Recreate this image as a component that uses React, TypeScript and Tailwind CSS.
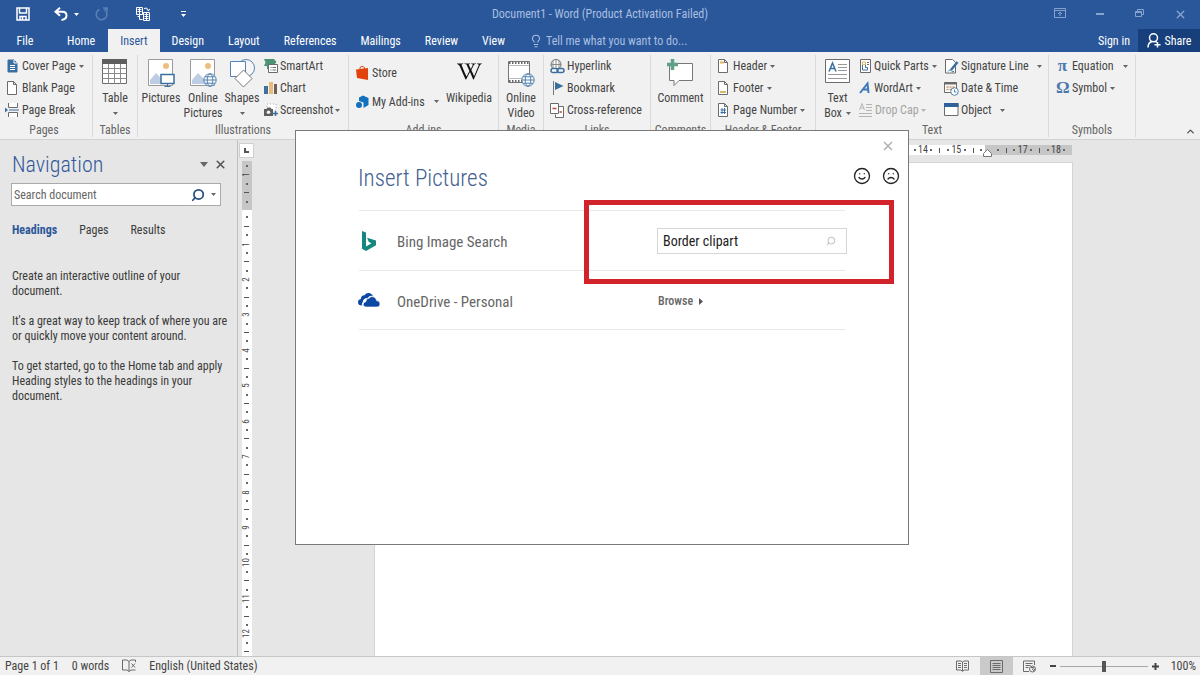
import React from 'react';
import { ChevronUp, Frown, Lightbulb, Search, Smile, X } from 'lucide-react';
import { FaWikipediaW } from 'react-icons/fa';

const Caret: React.FC<{ className?: string }> = ({ className = 'text-[#666]' }) => (
  <svg viewBox="0 0 5 3" className={`w-[5px] h-[3px] shrink-0 ${className}`} fill="currentColor">
    <path d="M0 0h5L2.5 3z" />
  </svg>
);

interface IconProps {
  w?: number;
  h?: number;
  children: React.ReactNode;
}

const Icon: React.FC<IconProps> = ({ w = 14, h = 14, children }) => (
  <svg width={w} height={h} viewBox={`0 0 ${w} ${h}`} fill="none" stroke="#6b6b6b" className="shrink-0">
    {children}
  </svg>
);

const Sheet = () => <path d="M2.5.5h6l3 3v10h-9zM8.5.5v3h3" fill="#fff" />;

const CoverPageIcon = () => (
  <Icon>
    <path d="M3 1h6l3 3v9H3z" fill="#3b6f9f" stroke="#3b6f9f" />
    <path d="M9 1v3h3M5 6.5h5M5 8.5h5M5 10.5h5" stroke="#fff" />
  </Icon>
);

const PageBreakIcon = () => (
  <Icon>
    <path d="M3.5 0v4.500h9V0M3.500 14V9.500h9V14" fill="#fff" />
    <path d="M4 7h10" stroke="#3b6f9f" />
    <path d="M0 4.500v5L3 7z" fill="#3b6f9f" stroke="none" />
  </Icon>
);

const TableIcon = () => (
  <Icon w={26} h={26}>
    <path d="M.5.5h24v24H.5z" fill="#fff" />
    <path d="M0 0h25v5H0z" fill="#5e5e5e" stroke="none" />
    <path d="M.5 9.500h24M.5 14.500h24M.5 19.500h24M6.500 5v20M12.500 5v20M18.500 5v20" stroke="#8a8a8a" />
  </Icon>
);

const Photo = () => (
  <>
    <path d="M.5.5h24v26H.5z" fill="#fff" stroke="#9a9a9a" />
    <circle cx="18" cy="7" r="3" fill="#ecc07c" stroke="none" />
    <path d="M2 25V21l6-7 6 6 3-3 7 7v1z" fill="#bdcde4" stroke="none" />
  </>
);

const PicturesIcon = () => (
  <Icon w={27} h={29}>
    <Photo />
    <path d="M13 15.500h13v9H13z" fill="#fff" stroke="#3b6f9f" strokeWidth="1.5" />
    <path d="M19.500 25v2.500M16.500 27.500h6" stroke="#3b6f9f" />
  </Icon>
);

const Globe = () => (
  <g stroke="#4f7fae">
    <circle cx="20" cy="21" r="6.200" fill="#fff" />
    <ellipse cx="20" cy="21" rx="2.800" ry="6.200" />
    <path d="M14 21h12M15 17.800h10M15 24.200h10" />
  </g>
);

const OnlinePicturesIcon = () => (
  <Icon w={27} h={29}>
    <Photo />
    <Globe />
  </Icon>
);

const ShapesIcon = () => (
  <Icon w={27} h={29}>
    <circle cx="17" cy="9" r="8.500" fill="#f7f7f7" stroke="#5484b2" />
    <path d="M1.500 2.500h15v15h-15z" fill="#fff" stroke="#5484b2" />
    <path d="M14.500 11l8.500 8.500-8.500 8.500L6 19.500z" fill="#fff" stroke="#777" />
  </Icon>
);

const SmartArtIcon = () => (
  <Icon>
    <path d="M0 0h10l2.500 3L10 6H5v4H3V7H0l1.500-3.500z" fill="#4f9377" stroke="none" />
    <path d="M4.500 5.500h9v8h-9z" fill="#fff" />
    <path d="M6.500 8.500h1M8.500 8.500h3.500M6.500 11h1M8.500 11h3.500" />
  </Icon>
);

const ChartIcon = () => (
  <Icon>
    <path d="M0 5h4v8H0z" fill="#3f6f9f" stroke="none" />
    <path d="M5 1h4v12H5z" fill="#e8bb7b" stroke="none" />
    <path d="M10 3h3v10h-3z" fill="#6e6058" stroke="none" />
  </Icon>
);

const ScreenshotIcon = () => (
  <Icon>
    <path d="M3 1h9v6H3z" fill="#fff" stroke="#aaa" strokeDasharray="1 2" />
    <path d="M0 6h2.500L3.500 4.500h3L7.500 6H9v7H0z" fill="#5e5e5e" stroke="none" />
    <circle cx="4.500" cy="9.200" r="1.800" fill="#f1f1f1" stroke="none" />
    <path d="M11.500 8v5M9 10.500h5" stroke="#3b6f9f" strokeWidth="1.500" />
  </Icon>
);

const StoreIcon = () => (
  <Icon w={13} h={15}>
    <path d="M4 4V2.500Q6 0 8.500 2.500V4" stroke="#d8430f" />
    <path d="M0 4.500L12 3v12L1 13z" fill="#e2430c" stroke="none" />
  </Icon>
);

const AddinsIcon = () => (
  <Icon w={13} h={14}>
    <path d="M7 .5l5.500 2.500v7L7.500 13V7.500L3 6V2.500z" fill="#1370bd" stroke="none" />
    <circle cx="3" cy="10" r="3" fill="#1370bd" stroke="none" />
  </Icon>
);

const VideoIcon = () => (
  <Icon w={27} h={29}>
    <path d="M.5 2.500h21v21H.5z" fill="#fff" stroke="#777" />
    <path d="M1 4h20M1 22h14" stroke="#666" strokeWidth="2" strokeDasharray="1.500 1.500" />
    <path d="M1 6.500h20M1 19.500h14" stroke="#bbb" />
    <Globe />
  </Icon>
);

const LinkIcon = () => (
  <Icon w={15} h={15}>
    <circle cx="6" cy="5.500" r="5" fill="#fff" />
    <path d="M1 5.500h10M6 .5v10M3 1.500v8M9 1.500v8" stroke="#8a8a8a" />
    <rect x="1" y="9.500" width="7" height="4" rx="2" fill="#fff" stroke="#3b6f9f" strokeWidth="1.500" />
    <rect x="7" y="9.500" width="7" height="4" rx="2" stroke="#3b6f9f" strokeWidth="1.500" />
  </Icon>
);

const BookmarkIcon = () => (
  <Icon w={15}>
    <path d="M3.500 0v14" stroke="#777" />
    <path d="M5 1l8.500 4L5 9z" fill="#3b6f9f" stroke="none" />
  </Icon>
);

const CrossRefIcon = () => (
  <Icon w={15} h={15}>
    <path d="M8.500 3.500h5v11h-8v-3" fill="#fff" />
    <path d="M.5.500h8v10h-8z" fill="#fff" />
    <path d="M2.500 5.500h4M9.500 9h2.500" stroke="#b5523b" strokeWidth="1.500" />
  </Icon>
);

const CommentIcon = () => (
  <Icon w={27} h={29}>
    <path d="M2.500 4.500h23v17H12l-5 5v-5H2.500z" fill="#fff" stroke="#777" />
    <path d="M5.500 0v11M0 5.500h11" stroke="#5fa184" strokeWidth="3.500" />
  </Icon>
);

const HeaderIcon = () => (
  <Icon>
    <Sheet />
    <path d="M4 3.500h4" stroke="#d8b765" strokeWidth="2" />
  </Icon>
);

const FooterIcon = () => (
  <Icon>
    <Sheet />
    <path d="M4 11h6" stroke="#d8b765" strokeWidth="2" />
  </Icon>
);

const PageNumberIcon = () => (
  <Icon>
    <Sheet />
    <path d="M6 5v6M8.500 5v6M4.500 7h5.500M4.500 9.500h5.500" stroke="#3b6f9f" />
  </Icon>
);

const TextBoxIcon = () => (
  <Icon w={26} h={25}>
    <path d="M.5.500h24v23H.5z" fill="#fff" />
    <path d="M4 12.500L7.500 4L11 12.500M5.500 9.500h4" stroke="#3b6f9f" strokeWidth="1.500" />
    <path d="M13 5.500h9M13 8.500h9M13 11.500h9M3 15.500h19M3 19.500h19" stroke="#999" />
  </Icon>
);

const QuickPartsIcon = () => (
  <Icon w={12} h={14}>
    <path d="M1.500.500h10v13H1.500z" fill="#fff" />
    <path d="M3.500 3h3v2.500h-3z" stroke="#d8b765" />
    <path d="M3.500 6v5h5V8.500h-2V6" stroke="#3b6f9f" />
    <path d="M8 3.500h2M8 5.500h2" />
  </Icon>
);

const WordArtIcon = () => (
  <Icon w={12} h={14}>
    <path d="M1 12L8.500 2.500L9.500 12M4.500 8.500h5" stroke="#3f7ab8" strokeWidth="2" />
  </Icon>
);

const DropCapIcon = () => (
  <Icon w={14} h={16}>
    <path d="M.5 8L3 1.500L5.500 8M1.500 6h3M7 2.500h6M7 5.500h6M7 8.500h6M0 11.500h13M0 14.500h13" stroke="#b5b5b5" />
  </Icon>
);

const SignatureIcon = () => (
  <Icon w={15} h={15}>
    <path d="M1.500.500h7l3 3v10.500h-10z" fill="#fff" />
    <path d="M13.500 3L7 11" stroke="#3b6f9f" strokeWidth="2.500" />
    <path d="M4 12.500q2-3 3-1t3 1" stroke="#3b6f9f" />
  </Icon>
);

const DateIcon = () => (
  <Icon w={15} h={15}>
    <path d="M.5 1.500h12v10H.5z" fill="#fff" />
    <path d="M.5 2.500h12" strokeWidth="2" />
    <path d="M2.500 6h8M2.500 8.500h6" stroke="#c98f5e" strokeWidth="1.500" strokeDasharray="2 1" />
    <circle cx="10.500" cy="10.500" r="3.800" fill="#fff" stroke="#5484b2" />
    <path d="M10.500 8.500v2.500h2" stroke="#5484b2" />
  </Icon>
);

const ObjectIcon = () => (
  <Icon w={15} h={14}>
    <path d="M.5.500h13.500v12H.5z" fill="#fff" />
    <path d="M0 0h14.500v4H0z" fill="#2f6299" stroke="none" />
  </Icon>
);

const GlyphIcon: React.FC<{ glyph: string }> = ({ glyph }) => (
  <span className="w-[13px] text-center font-['Liberation_Serif',serif] text-[17px] leading-[14px] font-bold text-[#4a78ad]">
    {glyph}
  </span>
);

interface SmallButtonProps {
  icon: React.ReactNode;
  label: string;
  caret?: 'near' | 'far';
  disabled?: boolean;
  className?: string;
}

const SmallButton: React.FC<SmallButtonProps> = ({ icon, label, caret, disabled, className = 'h-[22px] gap-[3px]' }) => (
  <button disabled={disabled} className={`flex items-center whitespace-nowrap disabled:text-[#a3a3a3] ${className}`}>
    {icon}
    <span>{label}</span>
    {caret === 'near' && <Caret className={disabled ? 'text-[#b5b5b5]' : 'text-[#666]'} />}
    {caret === 'far' && <Caret className="ml-1.5 text-[#666]" />}
  </button>
);

interface BigButtonProps {
  icon: React.ReactNode;
  lines: string[];
  caret?: boolean;
  caretInline?: boolean;
  className?: string;
}

const BigButton: React.FC<BigButtonProps> = ({ icon, lines, caret, caretInline, className = '' }) => (
  <button className={`flex flex-col items-center leading-[15px] shrink-0 ${className}`}>
    <span className="flex h-[36px] items-start justify-center pt-1">{icon}</span>
    {lines.map((line, i) => (
      <span key={line} className="flex items-center gap-1 whitespace-nowrap">
        {line}
        {caretInline && i === lines.length - 1 && <Caret />}
      </span>
    ))}
    {caret && <span className="flex h-[15px] items-center"><Caret /></span>}
  </button>
);

const Group: React.FC<{ title: string; className: string; children: React.ReactNode }> = ({ title, className, children }) => (
  <section className={`flex shrink-0 flex-col ${className}`}>
    <div className="flex h-[70px] items-start pt-0.5">{children}</div>
    <h3 className="h-[17px] text-center leading-[17px] whitespace-nowrap text-[#666]">{title}</h3>
  </section>
);

const Divider = () => <div className="my-0.5 w-px shrink-0 bg-[#dadada]" />;

const TitleBar = () => (
  <header className="flex h-[28px] shrink-0 items-center text-white">
    <div className="flex flex-1 items-center pl-4">
      <button aria-label="Save">
        <svg width="14" height="14" viewBox="0 0 14 14" fill="none" stroke="currentColor" strokeWidth="1.500">
          <path d="M1 1h12v12H1zM3.500 1v5h7V1M4 13V9.500h6v3.500M6.500 10v3" />
        </svg>
      </button>
      <button aria-label="Undo" className="ml-6">
        <svg width="14" height="14" viewBox="0 0 14 14" fill="none" stroke="currentColor" strokeWidth="2">
          <path d="M6 .8L1.500 4.800 6 8.800M2 4.800h6.500q4 0 4 3.700T7.500 13" />
        </svg>
      </button>
      <button aria-label="Undo list" className="ml-1.5"><Caret className="text-white" /></button>
      <button aria-label="Repeat" className="ml-4 text-[#5c80b8]">
        <svg width="14" height="14" viewBox="0 0 14 14" fill="none" stroke="currentColor" strokeWidth="1.500">
          <path d="M8 1h4v4M11.500 1.500L9 4M4.500 2.500a5.300 5.300 0 1 0 6.500 2" />
        </svg>
      </button>
      <button aria-label="Paste options" className="ml-[26px]">
        <svg width="16" height="16" viewBox="0 0 16 16" fill="none" stroke="currentColor">
          <path d="M1.500 1.500h6v7h-6zM2.500 3.500h4M2.500 5.500h4M8.500 6.500h6v8h-6zM9.500 8.500h4M9.500 10.500h4M9.500 12.500h4M11.500 6.500v8M4.500 1.500v12M4.500 10.500H2.500M9 2.500q3-2 4.500 2M11.500 3l2 1.800L15 3M4.500 13.500h3" />
        </svg>
      </button>
      <button aria-label="Customize toolbar" className="ml-[30px] flex flex-col items-center gap-0.5">
        <span className="h-px w-[5px] bg-white" />
        <Caret className="text-white" />
      </button>
    </div>
    <h1 className="mr-4 text-[#a9bfe0]">Document1 - Word (Product Activation Failed)</h1>
    <div className="flex flex-1 justify-end text-[#86a2cf]">
      <button aria-label="Ribbon display options" className="flex w-10 justify-center">
        <svg width="12" height="11" viewBox="0 0 12 11" fill="none" stroke="currentColor">
          <path d="M.5.500h11v9H.5zM.5 2.500h11M6 8V4M4 6l2-2 2 2" />
        </svg>
      </button>
      <button aria-label="Minimize" className="flex w-10 items-center justify-center"><span className="h-0.5 w-2 bg-current" /></button>
      <button aria-label="Restore" className="flex w-10 justify-center">
        <svg width="10" height="10" viewBox="0 0 10 10" fill="none" stroke="currentColor">
          <path d="M.5 3.500h6v5h-6zM2.500 3.500v-2h6v5h-2M.5 4.500h6" />
        </svg>
      </button>
      <button aria-label="Close" className="flex w-10 justify-center"><X size={13} strokeWidth={2.5} /></button>
    </div>
  </header>
);

const tabs = ['Design', 'Layout', 'References', 'Mailings', 'Review', 'View'];

const TabBar = () => (
  <nav className="flex h-[24px] shrink-0 items-stretch pt-px text-white">
    <button className="w-[54px] pr-1">File</button>
    <button className="px-[13px]">Home</button>
    <button className="bg-[#f1f1f1] px-3 text-[#2b579a]">Insert</button>
    {tabs.map(tab => <button key={tab} className="px-3">{tab}</button>)}
    <button className="ml-3 flex items-center gap-[3px] text-[#a9bfe0]">
      <Lightbulb size={14} strokeWidth={1.75} />
      Tell me what you want to do...
    </button>
    <button className="ml-auto px-2">Sign in</button>
    <button className="flex w-[62px] items-center justify-center gap-1 bg-[#173f7c]">
      <svg width="14" height="15" viewBox="0 0 14 15" fill="none" stroke="currentColor" strokeWidth="1.500">
        <circle cx="6.500" cy="4.800" r="4" />
        <path d="M1 14.500q0-5 4-6M8.500 8.500l1.500 1M10.500 9v5.500M7.500 11.800h6" />
      </svg>
      Share
    </button>
  </nav>
);

const Ribbon = () => (
  <div className="flex h-[88px] shrink-0 overflow-hidden border-b border-[#d2d2d2] bg-[#f1f1f1] pt-px">
    <Group title="Pages" className="w-[92px] pr-1">
      <div className="pl-[5px]">
        <SmallButton icon={<CoverPageIcon />} label="Cover Page" caret="near" />
        <SmallButton icon={<Icon><Sheet /></Icon>} label="Blank Page" />
        <SmallButton icon={<PageBreakIcon />} label="Page Break" />
      </div>
    </Group>
    <Divider />
    <Group title="Tables" className="w-[44px]">
      <BigButton icon={<TableIcon />} lines={['Table']} caret className="w-full" />
    </Group>
    <Divider />
    <Group title="Illustrations" className="w-[210px]">
      <BigButton icon={<PicturesIcon />} lines={['Pictures']} className="w-[46px]" />
      <BigButton icon={<OnlinePicturesIcon />} lines={['Online', 'Pictures']} className="w-[38px]" />
      <BigButton icon={<ShapesIcon />} lines={['Shapes']} caret className="w-[40px]" />
      <div className="pl-0.5">
        <SmallButton icon={<SmartArtIcon />} label="SmartArt" className="h-[22px] gap-0.5" />
        <SmallButton icon={<ChartIcon />} label="Chart" className="h-[22px] gap-0.5" />
        <SmallButton icon={<ScreenshotIcon />} label="Screenshot" caret="near" className="h-[22px] gap-0.5" />
      </div>
    </Group>
    <Divider />
    <Group title="Add-ins" className="w-[149px]">
      <div className="w-[95px] pt-[3px] pl-[7px]">
        <SmallButton icon={<StoreIcon />} label="Store" className="h-[29px] gap-[3px]" />
        <SmallButton icon={<AddinsIcon />} label="My Add-ins" caret="far" className="h-[29px] gap-[3px]" />
      </div>
      <BigButton icon={<FaWikipediaW size={25} color="#111" />} lines={['Wikipedia']} className="w-[50px]" />
    </Group>
    <Divider />
    <Group title="Media" className="w-[44px]">
      <BigButton icon={<VideoIcon />} lines={['Online', 'Video']} className="w-full" />
    </Group>
    <Divider />
    <Group title="Links" className="w-[106px]">
      <div className="pl-[6px]">
        <SmallButton icon={<LinkIcon />} label="Hyperlink" className="h-[22px] gap-0.5" />
        <SmallButton icon={<BookmarkIcon />} label="Bookmark" className="h-[22px] gap-0.5" />
        <SmallButton icon={<CrossRefIcon />} label="Cross-reference" className="h-[22px] gap-0.5" />
      </div>
    </Group>
    <Divider />
    <Group title="Comments" className="w-[59px]">
      <BigButton icon={<CommentIcon />} lines={['Comment']} className="w-full" />
    </Group>
    <Divider />
    <Group title="Header & Footer" className="w-[104px]">
      <div className="pl-[5px]">
        <SmallButton icon={<HeaderIcon />} label="Header" caret="near" />
        <SmallButton icon={<FooterIcon />} label="Footer" caret="near" />
        <SmallButton icon={<PageNumberIcon />} label="Page Number" caret="near" />
      </div>
    </Group>
    <Divider />
    <Group title="Text" className="w-[232px]">
      <BigButton icon={<TextBoxIcon />} lines={['Text', 'Box']} caretInline className="w-[43px]" />
      <div className="w-[85px]">
        <SmallButton icon={<QuickPartsIcon />} label="Quick Parts" caret="near" />
        <SmallButton icon={<WordArtIcon />} label="WordArt" caret="near" />
        <SmallButton icon={<DropCapIcon />} label="Drop Cap" caret="near" disabled className="h-[22px] gap-0.5" />
      </div>
      <div>
        <SmallButton icon={<SignatureIcon />} label="Signature Line" caret="far" className="h-[22px] gap-0.5" />
        <SmallButton icon={<DateIcon />} label="Date & Time" className="h-[22px] gap-0.5" />
        <SmallButton icon={<ObjectIcon />} label="Object" caret="far" className="h-[22px] gap-0.5" />
      </div>
    </Group>
    <Divider />
    <Group title="Symbols" className="w-[86px]">
      <div className="pl-[7px]">
        <SmallButton icon={<GlyphIcon glyph="π" />} label="Equation" caret="far" />
        <SmallButton icon={<GlyphIcon glyph="Ω" />} label="Symbol" caret="near" />
      </div>
    </Group>
    <Divider />
    <button aria-label="Collapse the ribbon" className="mt-auto ml-auto p-1 pb-0.5 text-[#555]">
      <ChevronUp size={11} strokeWidth={3} />
    </button>
  </div>
);

const Navigation = () => (
  <aside className="flex w-[238px] shrink-0 flex-col border-r border-[#c0c0c0] pl-3 text-[#3a3a3a]">
    <div className="flex h-[43px] items-center pt-1.5 pr-2.5">
      <h2 className="flex-1 text-[22px] font-light text-[#33599a]">Navigation</h2>
      <button aria-label="Pane options" className="pr-1.5">
        <svg width="8" height="5" viewBox="0 0 8 5" fill="#666"><path d="M0 0h8L4 5z" /></svg>
      </button>
      <button aria-label="Close pane" className="text-[#555]"><X size={13} strokeWidth={3} /></button>
    </div>
    <div className="-ml-px flex h-[23px] w-[210px] items-center border border-[#ababab] bg-white">
      <input
        aria-label="Search document"
        placeholder="Search document"
        className="min-w-0 flex-1 pl-0.5 outline-none placeholder:text-[#666]"
      />
      <button aria-label="Search" className="text-[#274f80]"><Search size={14} strokeWidth={3} className="-scale-x-100" /></button>
      <button aria-label="Search options" className="pr-1 pl-1.5"><Caret /></button>
    </div>
    <div className="mt-[15px] flex gap-[22px] leading-[18px]">
      <button className="font-bold text-[#2b579a]">Headings</button>
      <button>Pages</button>
      <button>Results</button>
    </div>
    <div className="mt-[30px] flex flex-col gap-[15px] leading-[15px]">
      <p>Create an interactive outline of your<br />document.</p>
      <p>It's a great way to keep track of where you are<br />or quickly move your content around.</p>
      <p>To get started, go to the Home tab and apply<br />Heading styles to the headings in your<br />document.</p>
    </div>
  </aside>
);

// One mark per quarter of a unit: number, dot, tick, dot
const mark = (i: number) => {
  if (i % 4 === 0) return i === 0 ? '' : String(i / 4);
  return i % 2 === 0 ? 'tick' : 'dot';
};

const RulerMark: React.FC<{ kind: string; vertical?: boolean }> = ({ kind, vertical }) => {
  let body: React.ReactNode = <span className={vertical ? '-rotate-90' : ''}>{kind}</span>;
  if (kind === 'dot') body = <span className="size-[2px] bg-[#666]" />;
  if (kind === 'tick') body = <span className={vertical ? 'h-px w-[5px] bg-[#555]' : 'h-[5px] w-px bg-[#555]'} />;
  return <span className="flex min-h-0 min-w-0 flex-1 items-center justify-center">{body}</span>;
};

const range = (from: number, to: number) => Array.from({ length: to - from }, (_, i) => from + i);

const VerticalRuler = () => (
  <div className="ml-0.5 flex w-[13px] shrink-0 flex-col items-center pt-[3px] text-[9px] leading-[9px] text-[#444]">
    <div className="flex h-[15px] w-[15px] shrink-0 items-center justify-center border border-[#d0d0d0] bg-white">
      <span className="size-[5px] border-b-2 border-l-2 border-[#555]" />
    </div>
    <div className="mt-[3px] flex h-[49px] w-[10px] shrink-0 flex-col bg-[#c6c6c6] pb-1">
      {['dot', '1', 'dot', 'tick', 'dot'].map((kind, i) => <RulerMark key={i} kind={kind} vertical />)}
    </div>
    <div className="flex min-h-0 w-[10px] flex-1 flex-col bg-white pt-[3px]">
      {range(1, 51).map(i => <RulerMark key={i} kind={mark(i)} vertical />)}
    </div>
  </div>
);

const Document = () => (
  <main className="flex min-w-0 flex-1 flex-col items-center overflow-hidden pr-[7px]">
    <div className="mt-[5px] flex h-[10px] w-[697px] shrink-0 text-[10px] leading-[10px] text-[#444]">
      <div className="w-[78px] bg-[#c6c6c6]" />
      <div className="flex grow-64 basis-0 bg-white">
        {range(0, 64).map(i => <RulerMark key={i} kind={mark(i)} />)}
      </div>
      <div className="relative flex grow-10 basis-0 bg-[#c6c6c6]">
        <svg width="9" height="8" viewBox="0 0 9 8" className="absolute top-[4px] -left-[2px]" fill="#fff" stroke="#777">
          <path d="M.5 7.500V4.500L4.500.5l4 4v3z" />
        </svg>
        {range(64, 74).map(i => <RulerMark key={i} kind={i === 64 ? '' : mark(i)} />)}
      </div>
      <div className="w-[3px] bg-[#c6c6c6]" />
    </div>
    <div className="mt-[7px] w-[699px] flex-1 border-x border-t border-[#d4d4d4] bg-white" />
  </main>
);

const InsertPictures = () => (
  <div className="absolute inset-x-0 top-[130px] flex justify-center pl-1">
    <div role="dialog" aria-label="Insert Pictures" className="relative h-[415px] w-[614px] border border-[#7a7a7a] bg-white">
      <div className="flex h-[28px] items-end justify-end pr-[13px] pb-1.5">
        <button aria-label="Close dialog" className="text-[#b0b0b0]"><X size={14} strokeWidth={2.5} /></button>
      </div>
      <div className="flex h-[51px] items-start justify-between pr-[8px] pl-[62px]">
        <h2 className="pt-[3px] text-[23px] font-light text-[#44618f]">Insert Pictures</h2>
        <div className="flex gap-[11px] pt-2 text-[#222]">
          <button aria-label="Send a smile"><Smile size={18} strokeWidth={1.75} /></button>
          <button aria-label="Send a frown"><Frown size={18} strokeWidth={1.75} /></button>
        </div>
      </div>
      <div className="mx-[63px] border-t border-[#e9e9e9] text-[15px] text-[#666]">
        <div className="flex h-[60px] items-center border-b border-[#e9e9e9]">
          <svg width="16" height="20" viewBox="0 0 16 20" fill="#14877e" className="mx-[3px] shrink-0">
            <path d="M0 0l4 1.400v14.200l5.500-3.300-2.700-1.300-1.700-4.300L14 9.600v4.700L4 20l-4-2.200z" />
          </svg>
          <label htmlFor="bing" className="w-[276px] shrink-0 pt-1 pl-4">Bing Image Search</label>
          <div className="-mr-0.5 flex h-[26px] min-w-0 flex-1 items-center border border-[#d6d6d6] bg-white pr-2.5">
            <input id="bing" defaultValue="Border clipart" className="min-w-0 flex-1 pt-0.5 pl-[5px] text-[14px] text-[#222] outline-none" />
            <button aria-label="Search Bing" className="text-[#c4c4c4]"><Search size={10} strokeWidth={2.5} className="-scale-x-100" /></button>
          </div>
        </div>
        <div className="flex h-[59px] items-center border-b border-[#e9e9e9]">
          <svg width="22" height="14" viewBox="0 0 22 14" fill="#0c49a5" className="-ml-px shrink-0">
            <path d="M4 12.500Q0 12.500 0 9.200 0 6.500 2.800 6 3 2.500 6.500 2.200 8.500-.8 12 .3q2 .6 3 2.500-3.500-.8-5.500 2.200-4.500.2-4.800 4.200Q3.500 10.500 4 12.500z" />
            <path d="M8 14q-2.800-.2-2.800-2.600 0-2.200 2.600-2.600Q8 5.500 11 5.200 13 2.600 16 4q2.300 1 2.500 3.600Q22 8 22 11q0 3-3 3z" stroke="#fff" strokeWidth=".6" />
          </svg>
          <span className="w-[278px] shrink-0 pt-1 pl-[17px]">OneDrive - Personal</span>
          <button className="flex items-center gap-1.5 pt-0.5 text-[12px] font-medium">
            Browse
            <svg width="4" height="7" viewBox="0 0 4 7" fill="#555"><path d="M0 0l4 3.500L0 7z" /></svg>
          </button>
        </div>
      </div>
      <div className="pointer-events-none absolute top-[69px] left-[288px] h-[84px] w-[310px] border-[5px] border-[#d2232a]" />
    </div>
  </div>
);

const StatusBar = () => (
  <footer className="flex h-[19px] shrink-0 items-stretch border-t border-[#c6c6c6] bg-[#f1f1f1] pr-1 pl-[5px] text-[#444]">
    <div className="flex items-center gap-[13px]">
      <span>Page 1 of 1</span>
      <span>0 words</span>
      <button aria-label="Proofing">
        <Icon>
          <path d="M7 2.500L5 1H.5v10H5l2 1.500zM7 2.500L9 1h4.500v2M7 12.500L9 11h4.500M9.500 4.500l3.500 4M13 4.500l-3.500 4" />
        </Icon>
      </button>
      <span>English (United States)</span>
    </div>
    <div className="ml-auto flex items-stretch">
      <button aria-label="Read mode" className="flex w-[36px] items-center justify-center">
        <Icon w={13} h={12}>
          <path d="M6.500 2L5 1H.5v9H5l1.500 1.500L8 10h4.500V1H8zM6.500 2v9M2 3.500h3M2 5.500h3M2 7.500h3M8 3.500h3M8 5.500h3M8 7.500h3" />
        </Icon>
      </button>
      <button aria-label="Print layout" className="flex w-[33px] items-center justify-center bg-[#cacaca]">
        <Icon w={13} h={13}>
          <path d="M.5.500h12v12H.5zM2.500 3.500h8M2.500 5.500h8M2.500 7.500h8M2.500 9.500h8" />
        </Icon>
      </button>
      <button aria-label="Web layout" className="flex w-[33px] items-center justify-center">
        <Icon w={13} h={13}>
          <path d="M6 11.500H.5V1h11v4M2.500 3.500h7M2.500 5.500h5M2.500 7.500h3" />
          <circle cx="9.500" cy="9" r="3" fill="#f1f1f1" />
          <path d="M8 7.500h2.500l-1 2.500M10 11l2-2" />
        </Icon>
      </button>
      <button aria-label="Zoom out" className="flex w-[14px] items-center justify-center"><span className="h-0.5 w-1.5 bg-[#444]" /></button>
      <input
        type="range"
        aria-label="Zoom"
        defaultValue={50}
        className="my-auto h-3 w-[88px] appearance-none bg-transparent [&::-webkit-slider-runnable-track]:h-px [&::-webkit-slider-runnable-track]:bg-[#a8a8a8] [&::-webkit-slider-thumb]:-mt-[5px] [&::-webkit-slider-thumb]:h-[11px] [&::-webkit-slider-thumb]:w-1 [&::-webkit-slider-thumb]:appearance-none [&::-webkit-slider-thumb]:bg-[#555]"
      />
      <button aria-label="Zoom in" className="flex w-[14px] items-center justify-center">
        <Icon w={7} h={7}><path d="M3.500 0v7M0 3.500h7" stroke="#444" strokeWidth="2" /></Icon>
      </button>
      <span className="w-[34px] self-center text-right">100%</span>
    </div>
  </footer>
);

export default function App() {
  return (
    <div className="relative flex h-screen flex-col overflow-hidden bg-[#e6e6e6] font-['Roboto_Condensed','Roboto',sans-serif] text-[12px] text-[#444]">
      <div className="bg-[#2a579a]">
        <TitleBar />
        <TabBar />
      </div>
      <Ribbon />
      <div className="flex min-h-0 flex-1">
        <Navigation />
        <VerticalRuler />
        <Document />
      </div>
      <StatusBar />
      <InsertPictures />
    </div>
  );
}
